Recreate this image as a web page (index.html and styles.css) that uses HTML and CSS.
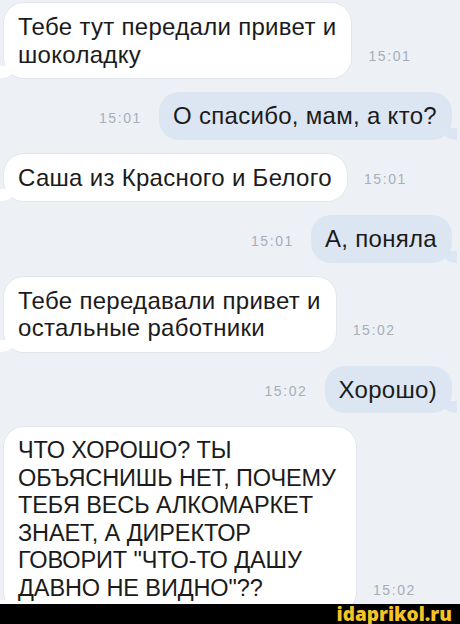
FILE: index.html
```html
<!DOCTYPE html>
<html lang="ru">
<head>
<meta charset="utf-8">
<link rel="stylesheet" href="styles.css">
</head>
<body>
<div class="chat">
  <div class="row in">
    <div class="bubble">Тебе тут передали привет и<br>шоколадку</div>
    <span class="time">15:01</span>
  </div>
  <div class="row out">
    <span class="time">15:01</span>
    <div class="bubble">О спасибо, мам, а кто?</div>
  </div>
  <div class="row in">
    <div class="bubble">Саша из Красного и Белого</div>
    <span class="time">15:01</span>
  </div>
  <div class="row out">
    <span class="time">15:01</span>
    <div class="bubble">А, поняла</div>
  </div>
  <div class="row in">
    <div class="bubble">Тебе передавали привет и<br>остальные работники</div>
    <span class="time">15:02</span>
  </div>
  <div class="row out">
    <span class="time">15:02</span>
    <div class="bubble">Хорошо)</div>
  </div>
  <div class="row in">
    <div class="bubble wide">ЧТО ХОРОШО? ТЫ<br>ОБЪЯСНИШЬ НЕТ, ПОЧЕМУ<br>ТЕБЯ ВЕСЬ АЛКОМАРКЕТ<br>ЗНАЕТ, А ДИРЕКТОР<br>ГОВОРИТ "ЧТО-ТО ДАШУ<br>ДАВНО НЕ ВИДНО"??</div>
    <span class="time">15:02</span>
  </div>
</div>
<div class="watermark">idaprikol.ru</div>
</body>
</html>
```
FILE: styles.css
```css
html, body {
  margin: 0;
  padding: 0;
}
body {
  width: 460px;
  height: 624px;
  overflow: hidden;
  background: #edf1f6;
  font-family: "Liberation Sans", Arial, sans-serif;
  position: relative;
}
.chat {
  display: flex;
  flex-direction: column;
  gap: 14px;
  padding: 3px 8px 0 4px;
}
.row {
  display: flex;
  align-items: flex-end;
  gap: 17px;
}
.row.out {
  justify-content: flex-end;
}
.bubble {
  position: relative;
  font-size: 24px;
  letter-spacing: 0.3px;
  line-height: 27.5px;
  color: #1b1b1b;
  padding: 10px 15px 10px 14px;
  border-radius: 20px;
  white-space: nowrap;
}
.in .bubble {
  background: #ffffff;
  box-shadow: 0 0 0 1px #e2e7ee;
}
.out .bubble {
  background: #dce6f2;
}
.in .bubble::before {
  content: "";
  position: absolute;
  left: -4px;
  bottom: 0;
  width: 14px;
  height: 12px;
  background: #ffffff;
  border-bottom-right-radius: 12px 10px;
}
.out .bubble::before {
  content: "";
  position: absolute;
  right: -5px;
  bottom: 0;
  width: 14px;
  height: 12px;
  background: #dce6f2;
  border-bottom-left-radius: 12px 10px;
}
.bubble.wide {
  font-size: 23.5px;
  letter-spacing: -0.1px;
  padding-right: 20px;
}
.time {
  font-size: 14px;
  letter-spacing: 1.6px;
  color: #a6aeb8;
  padding-bottom: 14px;
}
.watermark {
  position: absolute;
  left: 0;
  right: 0;
  bottom: 0;
  height: 20px;
  background: #000;
  color: #f4c325;
  font-family: "Open Sans", sans-serif;
  font-weight: 800;
  font-size: 19px;
  line-height: 20px;
  display: flex;
  align-items: center;
  justify-content: flex-end;
  padding-right: 8px;
}
```
